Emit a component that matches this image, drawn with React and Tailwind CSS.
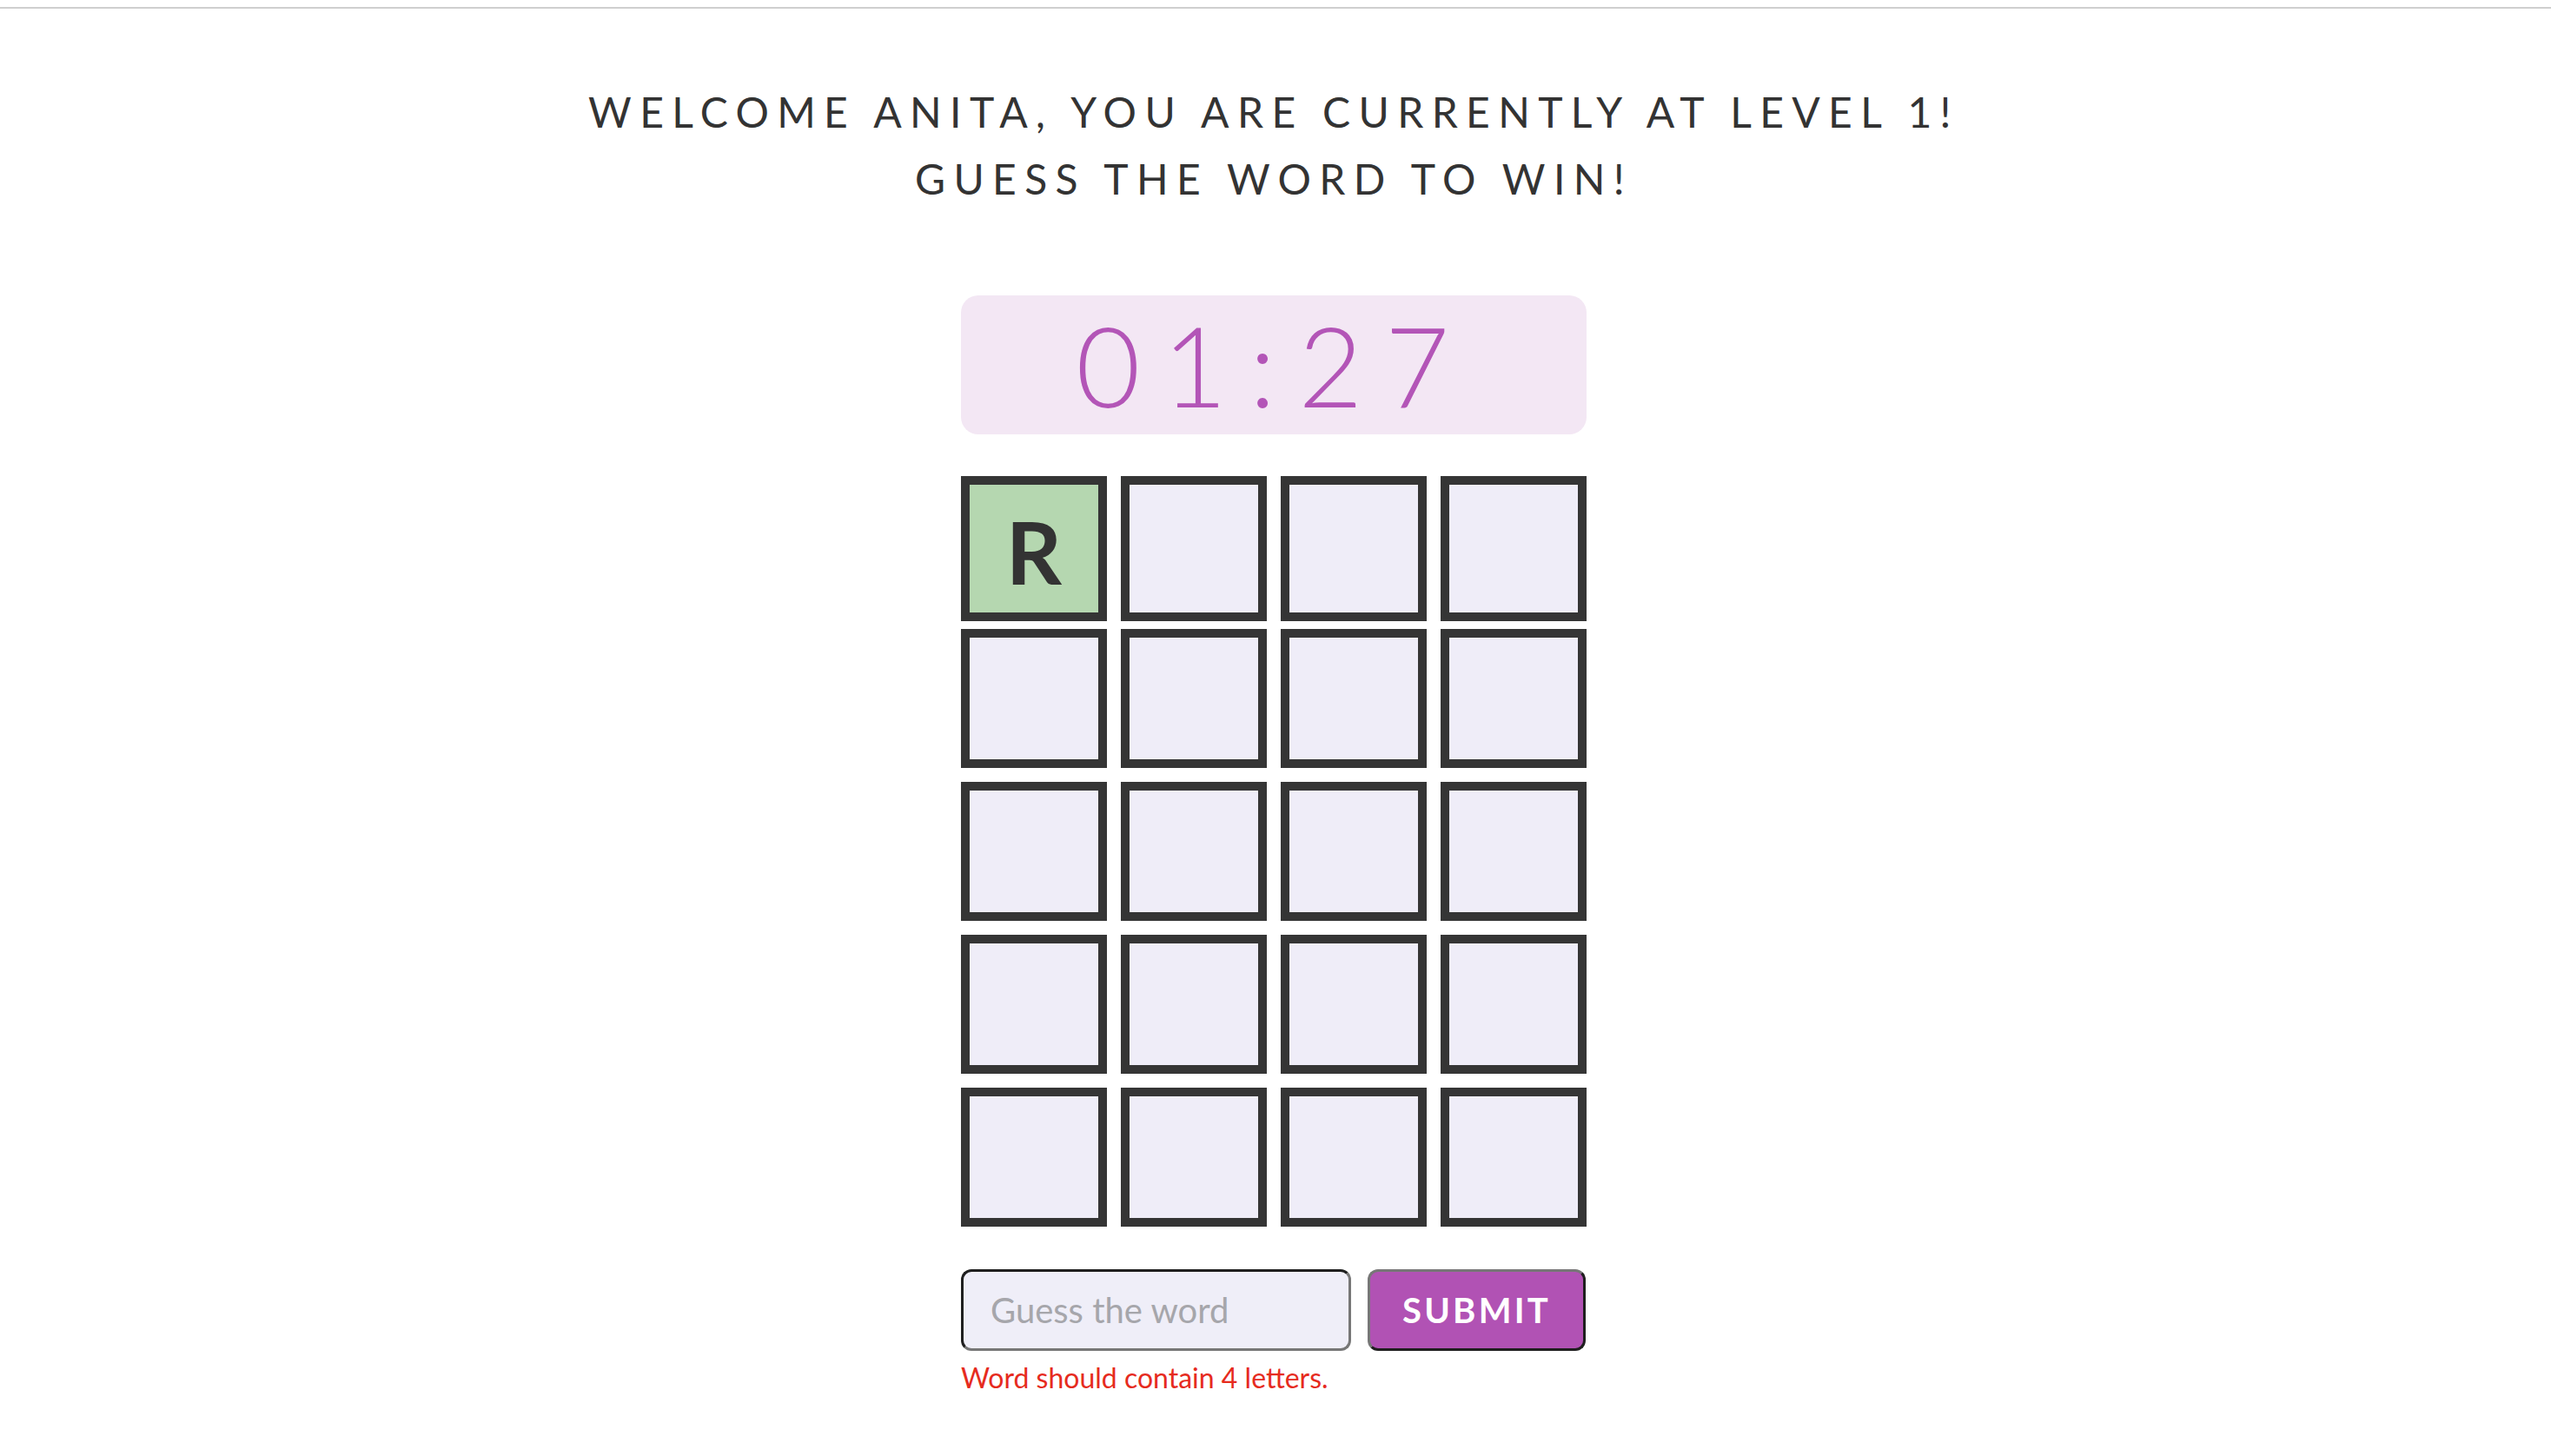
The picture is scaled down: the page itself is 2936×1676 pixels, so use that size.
import React from 'react';

const ROWS = [
  ['R', '', '', ''],
  ['', '', '', ''],
  ['', '', '', ''],
  ['', '', '', ''],
  ['', '', '', ''],
];

function Tile({ letter, tall }) {
  // a filled-in tile is green, empty ones stay lavender
  const bg = letter ? 'bg-[#b5d7b0]' : 'bg-[#efedf8]';
  return (
    <div
      className={`${bg} ${tall ? 'h-[167px] pt-[5px]' : 'h-[160px]'} w-[168px] border-[10px] border-[#353535] flex items-center justify-center text-[100px] font-bold text-[#333] leading-none`}
    >
      {letter}
    </div>
  );
}

function App() {
  return (
    <div className="min-h-screen bg-white font-['Lato','Noto_Sans',sans-serif]">
      <div className="h-[8px]" />
      <div className="h-[2px] bg-[#cfcfcf]" />

      <main className="flex flex-col items-center pt-[81px] pr-[4px]">
        {/* Greeting */}
        <h1 className="text-center text-[48px] leading-[1.6] tracking-[0.195em] font-normal text-[#333] uppercase">
          Welcome Anita, you are currently at level 1!
          <br />
          Guess the word to win!
        </h1>

        {/* Countdown */}
        <div className="mt-[95px] w-[720px] h-[160px] rounded-[20px] bg-[#f3e7f4] flex items-center justify-center">
          <span className="text-[128px] font-light leading-none tracking-[0.2em] text-[#b355b7]">
            01:27
          </span>
        </div>

        {/* Board */}
        <div className="mt-[48px] w-[720px] flex flex-col">
          <div className="flex gap-[16px]">
            {ROWS[0].map((l, i) => (
              <Tile key={i} letter={l} tall />
            ))}
          </div>
          <div className="mt-[9px] flex flex-col gap-[16px]">
            {ROWS.slice(1).map((row, r) => (
              <div key={r} className="flex gap-[16px]">
                {row.map((l, i) => (
                  <Tile key={i} letter={l} />
                ))}
              </div>
            ))}
          </div>
        </div>

        {/* Guess form */}
        <form className="mt-[49px] w-[720px] flex flex-col" onSubmit={(e) => e.preventDefault()}>
          <div className="flex gap-[19px]">
            <input
              type="text"
              placeholder="Guess the word"
              className="w-[449px] h-[94px] rounded-[12px] border-[3px] border-t-[#1f1f1f] border-l-[#1f1f1f] border-b-[#777] border-r-[#777] bg-[#efeef8] pl-[31px] text-[40px] text-[#333] placeholder:text-[#a6a6ab] outline-none"
            />
            <button
              type="submit"
              className="w-[251px] h-[94px] rounded-[12px] border-[3px] border-t-[#777] border-l-[#777] border-b-[#1f1f1f] border-r-[#1f1f1f] bg-[#b152b4] text-white text-[40px] font-bold tracking-[0.08em] uppercase"
            >
              Submit
            </button>
          </div>
          <p className="mt-[12px] text-[32px] leading-[1.2] text-[#e62b1e]">Word should contain 4 letters.</p>
        </form>
      </main>
    </div>
  );
}

export default App;
